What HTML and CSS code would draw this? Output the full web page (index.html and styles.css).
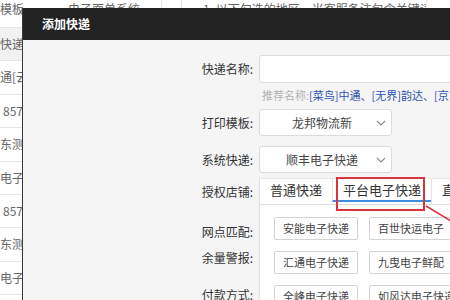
FILE: index.html
```html
<!DOCTYPE html>
<html lang="zh-CN">
<head>
    <meta charset="UTF-8">
    <meta name="viewport" content="width=device-width, initial-scale=1.0">
    <title>添加快递</title>
    <link rel="stylesheet" href="styles.css">
</head>
<body>
    <!-- page table behind the dialog -->
    <div class="table">
        <div class="row head">
            <div class="cell c1">模板</div>
            <div class="cell c2">电子面单系统</div>
            <div class="cell c3"></div>
            <div class="cell c4">1. 以下勾选的地区，当客服备注包含关键词</div>
        </div>
        <div class="row hover"><div class="cell c1">快递[云</div></div>
        <div class="row"><div class="cell c1">通[云栈</div></div>
        <div class="row"><div class="cell c1 num">857</div></div>
        <div class="row"><div class="cell c1">东测试</div></div>
        <div class="row"><div class="cell c1">电子送</div></div>
        <div class="row"><div class="cell c1 num">857</div></div>
        <div class="row"><div class="cell c1">东测试</div></div>
        <div class="row"><div class="cell c1">电子送</div></div>
    </div>

    <div class="modal">
        <div class="modal-head">添加快递</div>
        <div class="modal-body">
            <div class="field">
                <label class="label">快递名称:</label>
                <div class="input"></div>
            </div>
            <div class="hint">推荐名称:<span class="link">[菜鸟]中通、[无界]韵达、[京东]顺丰</span></div>
            <div class="field mt7">
                <label class="label">打印模板:</label>
                <div class="select">
                    <span class="select-text">龙邦物流新</span>
                    <svg class="chev" width="10" height="6" viewBox="0 0 10 6"><polyline points="1,1 5,5 9,1" /></svg>
                </div>
            </div>
            <div class="field mt10">
                <label class="label">系统快递:</label>
                <div class="select">
                    <span class="select-text">顺丰电子快递</span>
                    <svg class="chev" width="10" height="6" viewBox="0 0 10 6"><polyline points="1,1 5,5 9,1" /></svg>
                </div>
            </div>
            <div class="field mt5">
                <label class="label">授权店铺:</label>
                <div class="tabs">
                    <div class="tab">普通快递</div>
                    <div class="tab active">平台电子快递</div>
                    <div class="tab">直营快递</div>
                </div>
            </div>
            <div class="group">
                <div class="side">
                    <div class="label l1">网点匹配:</div>
                    <div class="label l2">余量警报:</div>
                    <div class="label l3">付款方式:</div>
                </div>
                <div class="panel">
                    <div class="btn">安能电子快递</div>
                    <div class="btn">百世快运电子</div>
                    <div class="btn">汇通电子快递</div>
                    <div class="btn">九曳电子鲜配</div>
                    <div class="btn">全峰电子快递</div>
                    <div class="btn">如风达电子快递</div>
                </div>
            </div>
        </div>
    </div>

    <!-- red annotation -->
    <div class="mark"></div>
    <svg class="arrow" width="26" height="20" viewBox="0 0 26 20"><line x1="1" y1="1" x2="26" y2="16" /></svg>
</body>
</html>
```

FILE: styles.css
```css
* {
    box-sizing: border-box;
}
body {
    margin: 0;
    width: 450px;
    height: 300px;
    overflow: hidden;
    position: relative;
    background: #fff;
    color: #666;
    font-family: "Noto Sans CJK SC", "Noto Sans", sans-serif;
    font-size: 12px;
}

/* background table */
.table .row {
    display: flex;
    height: 33.4px;
    line-height: 32px;
    border-bottom: 1px solid #e6e6e6;
    white-space: nowrap;
}
.table .head {
    height: 28px;
    line-height: 18px;
}
.row.hover {
    background: #f1f1f1;
}
.cell {
    overflow: hidden;
}
.c1 {
    width: 62px;
}
.c1.num {
    padding-left: 3px;
}
.c2 {
    width: 100px;
    padding-left: 6px;
    border-right: 1px solid #e6e6e6;
}
.c3 {
    width: 20px;
    border-right: 1px solid #e6e6e6;
}
.c4 {
    width: 245px;
    padding-left: 21px;
    border-right: 1px solid #e6e6e6;
}

/* dialog */
.modal {
    position: absolute;
    left: 22px;
    top: 8px;
    bottom: 0;
    width: 480px;
    background: #f5f5f5;
    border-left: 1px solid #3a3a3a;
}
.modal-head {
    height: 32px;
    line-height: 32px;
    padding-left: 19px;
    background: #232323;
    color: #fff;
    font-weight: bold;
}
.modal-body {
    padding-top: 15px;
    color: #333;
}
.field {
    display: flex;
    align-items: center;
}
.mt5 { margin-top: 5px; }
.mt7 { margin-top: 7px; }
.mt10 { margin-top: 10px; }
.label {
    display: block;
    flex-shrink: 0;
    width: 232px;
    margin-right: 4px;
    padding-right: 2px;
    text-align: right;
    line-height: 18px;
}
.input {
    width: 300px;
    height: 28px;
    background: #fff;
    border: 1px solid #dcdcdc;
    border-radius: 3px;
}
.hint {
    margin-top: 5px;
    padding-left: 239px;
    font-size: 11px;
    line-height: 14px;
    color: #b3b3b3;
    white-space: nowrap;
}
.hint .link {
    color: #2f52b4;
}
.select {
    display: flex;
    align-items: center;
    width: 133px;
    height: 27px;
    padding-left: 8px;
    background: #fff;
    border: 1px solid #dcdcdc;
    border-radius: 3px;
}
.select-text {
    flex: 1;
    text-align: center;
    color: #444;
    line-height: 18px;
}
.chev {
    margin-right: 5px;
}
.chev polyline {
    fill: none;
    stroke: #888;
    stroke-width: 1.1;
}

/* tabs */
.tabs {
    display: flex;
    width: 300px;
    height: 27px;
    background: #fff;
    border-top: 1px solid #e6e6e6;
    border-bottom: 1px solid #dedede;
}
.tab {
    padding: 0 10px;
    line-height: 22px;
    font-size: 13px;
    color: #333;
    border-left: 1px solid #e2e2e2;
    white-space: nowrap;
}
.tab.active {
    height: 23px;
    border-bottom: 2px solid #3b8ee0;
}
.group {
    display: flex;
}
.side {
    width: 236px;
    flex-shrink: 0;
}
.l1 { margin-top: 18px; }
.l2 { margin-top: 8px; }
.l3 { margin-top: 19px; }
.panel {
    display: grid;
    grid-template-columns: 84px auto;
    justify-content: start;
    justify-items: start;
    align-content: start;
    gap: 11px;
    width: 300px;
    height: 120px;
    padding: 12px 0 0 14px;
    background: #fff;
    border-left: 1px solid #e2e2e2;
}
.btn {
    height: 23px;
    min-width: 84px;
    padding: 0 8px;
    line-height: 21px;
    font-size: 11px;
    color: #444;
    text-align: center;
    white-space: nowrap;
    background: #fff;
    border: 1px solid #d4d4d4;
    border-radius: 2px;
}

/* annotation */
.mark {
    position: absolute;
    left: 336px;
    top: 177px;
    width: 89px;
    height: 34px;
    border: 2px solid #d9333b;
}
.arrow {
    position: absolute;
    left: 425px;
    top: 205px;
}
.arrow line {
    stroke: #d9333b;
    stroke-width: 1.5;
}
```
